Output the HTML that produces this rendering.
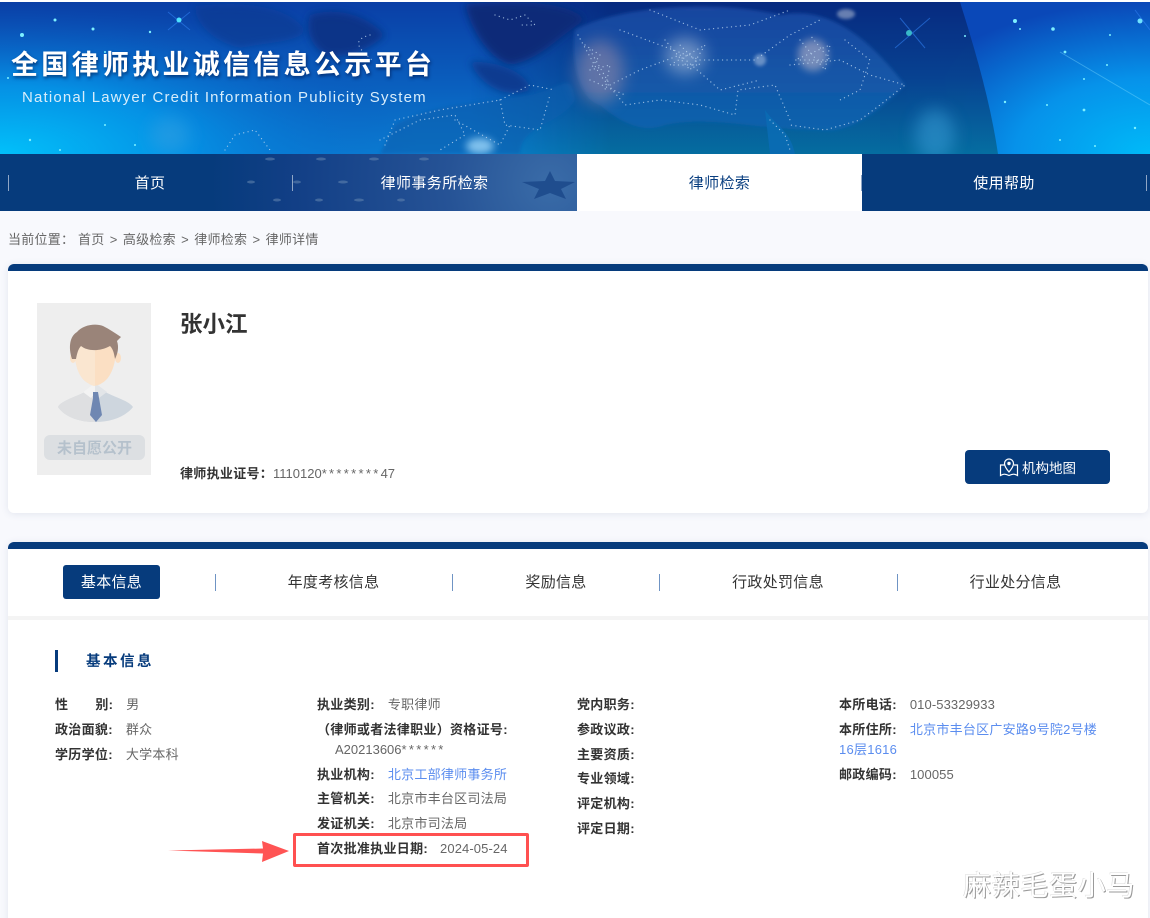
<!DOCTYPE html>
<html lang="zh"><head><meta charset="utf-8"><title>全国律师执业诚信信息公示平台</title>
<style>
*{box-sizing:border-box}
html,body{margin:0;padding:0;width:1150px;height:918px;overflow:hidden}
body{background:#f8f9fd;font-family:"Liberation Sans","Noto Sans CJK SC",sans-serif;color:#666}
#p{position:relative;width:1150px;height:918px;overflow:hidden;background:#f8f9fd}
.a{position:absolute;white-space:nowrap}
.t{position:absolute;white-space:nowrap;font-size:13px;line-height:20px;color:#666;letter-spacing:.25px}
.t b{color:#333;font-weight:700;letter-spacing:.3px}
.t b + span{margin-left:13px}
.n{letter-spacing:.1px}
.s{letter-spacing:2.3px}
.l{color:#5b8def}
.nav{position:absolute;top:154px;height:57px;line-height:59px;font-size:15px;letter-spacing:.4px;color:#fff;text-align:center}
.sep{position:absolute;width:1px;background:#8fa6c6}
.tab{position:absolute;top:565px;height:34px;line-height:36px;font-size:15px;letter-spacing:.3px;color:#333;text-align:center;transform:translateX(-50%)}
.ts{position:absolute;top:574px;width:1px;height:17px;background:#6f94c4}
.card{position:absolute;left:8px;width:1140px;background:#fff;border-radius:6px;border-top:7px solid #063b7c;box-shadow:0 1px 8px rgba(40,60,110,.1)}
</style></head><body><div id="p">

<div class="a" style="left:0;top:0;width:1150px;height:2px;background:#fff"></div>
<svg class="a" style="left:0;top:2px" width="1150" height="152" viewBox="0 2 1150 152">
<defs>
<linearGradient id="b" x1="0" y1="0" x2="0" y2="1"><stop offset="0" stop-color="#0a3fa6"/><stop offset=".55" stop-color="#0a5fbe"/><stop offset="1" stop-color="#0a7fd2"/></linearGradient>
<radialGradient id="lc" cx="0" cy="1" r="1"><stop offset="0" stop-color="#02c0fa"/><stop offset=".45" stop-color="#0590e4"/><stop offset="1" stop-color="#0a55c0" stop-opacity="0"/></radialGradient>
<radialGradient id="rc" cx="1" cy="1" r="1"><stop offset="0" stop-color="#00baf8"/><stop offset=".5" stop-color="#0692ea"/><stop offset="1" stop-color="#0a48b8"/></radialGradient>
<linearGradient id="g" x1="0" y1="0" x2="0" y2="1"><stop offset="0" stop-color="#07297e"/><stop offset=".5" stop-color="#07428f"/><stop offset="1" stop-color="#056d9e"/></linearGradient>
<linearGradient id="land" x1="0" y1="0" x2="0" y2="1"><stop offset="0" stop-color="#1a459f"/><stop offset="1" stop-color="#0e63ad"/></linearGradient>
<linearGradient id="mg" gradientUnits="userSpaceOnUse" x1="470" y1="0" x2="610" y2="0"><stop offset="0" stop-color="#000"/><stop offset="1" stop-color="#fff"/></linearGradient>
<mask id="m" maskUnits="userSpaceOnUse" x="0" y="0" width="1150" height="160"><rect x="0" y="0" width="1150" height="160" fill="url(#mg)"/></mask>
<filter id="f8" x="-60%" y="-60%" width="220%" height="220%"><feGaussianBlur stdDeviation="8"/></filter>
<filter id="f4" x="-60%" y="-60%" width="220%" height="220%"><feGaussianBlur stdDeviation="4"/></filter>
<filter id="f2" x="-60%" y="-60%" width="220%" height="220%"><feGaussianBlur stdDeviation="1.5"/></filter>
</defs>
<rect x="0" y="2" width="1150" height="152" fill="url(#b)"/>
<rect x="0" y="2" width="420" height="152" fill="url(#lc)"/>
<rect x="880" y="2" width="270" height="152" fill="url(#rc)"/>
<path d="M960 2C975 50 990 100 998 154H440V2Z" fill="url(#g)" opacity=".95" mask="url(#m)"/>
<path d="M195 6C250 0 290 8 305 30C300 42 270 42 240 48C215 42 195 25 195 6Z" fill="#0a3a92" opacity=".7" filter="url(#f4)"/>
<path d="M310 15C340 5 370 18 385 35C370 50 345 60 325 55C310 45 305 30 310 15Z" fill="#083184" opacity=".9" filter="url(#f4)"/>
<path d="M465 4C510 0 570 0 585 20C555 40 540 60 510 65C490 60 470 30 465 4Z" fill="#072a78" filter="url(#f4)"/>
<path d="M470 62C500 60 530 75 530 90C505 100 480 85 470 62Z" fill="#0a3a90" filter="url(#f4)"/>
<path d="M575 30C620 5 720 0 780 15C830 5 870 40 905 85C880 110 850 135 820 130C760 130 710 115 665 125C640 135 615 118 600 105C580 100 570 60 575 30Z" fill="url(#land)" filter="url(#f2)"/>
<path d="M395 125C440 100 480 105 530 95C565 88 570 70 575 100C560 125 520 125 520 154H380Z" fill="#0c5faf" opacity=".6" filter="url(#f2)"/>
<path d="M765 110C775 125 790 130 795 154H770Z" fill="#0a6bb4" opacity=".9"/>
<ellipse cx="600" cy="72" rx="24" ry="32" fill="#a790a8" opacity=".5" filter="url(#f8)"/>
<ellipse cx="685" cy="56" rx="20" ry="18" fill="#c3cfe2" opacity=".5" filter="url(#f8)"/>
<ellipse cx="813" cy="55" rx="15" ry="16" fill="#c6bdcc" opacity=".55" filter="url(#f4)"/>
<ellipse cx="760" cy="60" rx="6" ry="6" fill="#b7cbe6" opacity=".5" filter="url(#f2)"/>
<ellipse cx="846" cy="14" rx="9" ry="5" fill="#c6cfdf" opacity=".5" filter="url(#f2)"/>
<ellipse cx="480" cy="146" rx="14" ry="8" fill="#a9e0ff" opacity=".75" filter="url(#f4)"/>
<ellipse cx="935" cy="135" rx="20" ry="26" fill="#3ea2dc" opacity=".5" filter="url(#f8)"/>
<ellipse cx="170" cy="135" rx="20" ry="18" fill="#3ba0e0" opacity=".45" filter="url(#f8)"/>
<g fill="none" stroke="#b9d4ef" stroke-width="1.3" stroke-linecap="round" stroke-dasharray="0 4.5" opacity=".8">
<path d="M578 35L600 75 625 105 660 100 700 105 735 115 738 90 775 85 790 120"/>
<path d="M620 30L660 45 700 60 755 60 790 35 820 20"/>
<path d="M590 50L610 85 640 70 680 55 720 90 760 80"/>
<path d="M585 45L600 55 590 70 610 65 605 90M590 80L625 95"/>
<path d="M665 40L690 70 705 45 670 65 700 65 680 45"/>
<path d="M800 40L825 70 830 45 795 60 830 60 810 35"/>
<path d="M790 65L840 60 870 75 905 85 880 105 860 120 825 130 790 125"/>
<path d="M650 10L700 30 750 25 790 10"/>
<path d="M845 40L870 60 860 90 840 100"/>
<path d="M770 120L785 135 790 150"/>
<path d="M380 140L420 120 455 115 465 135 440 150"/>
<path d="M385 145L395 120 440 110 500 100 530 85 555 90"/>
<path d="M500 100L505 125 540 130 550 95"/>
<path d="M455 120L500 145 510 125"/>
<path d="M495 15L510 20 525 15 535 25 520 25"/>
<path d="M225 150L235 135 255 130 270 150"/>
<path d="M370 35C350 40 360 50 372 60"/>
</g>
<g fill="#7df0ff">
<circle cx="22" cy="35" r="2"/><circle cx="55" cy="20" r="1.5"/><circle cx="93" cy="29" r="1.5"/><circle cx="150" cy="32" r="1.2"/><circle cx="105" cy="52" r="1"/><circle cx="8" cy="78" r="1"/><circle cx="30" cy="140" r="1.2"/><circle cx="60" cy="150" r="1"/><circle cx="105" cy="125" r="1"/><circle cx="135" cy="145" r="1"/>
<circle cx="1015" cy="21" r="2"/><circle cx="1053" cy="29" r="1.8"/><circle cx="1020" cy="29" r="1"/><circle cx="1110" cy="35" r="1"/><circle cx="965" cy="36" r="1"/><circle cx="1065" cy="52" r="1.4"/><circle cx="1107" cy="65" r="1"/><circle cx="1084" cy="79" r="1"/><circle cx="1005" cy="102" r="1.2"/><circle cx="1084" cy="110" r="1.4"/><circle cx="1047" cy="105" r="1"/><circle cx="1095" cy="146" r="1"/><circle cx="1135" cy="128" r="1.2"/><circle cx="1060" cy="140" r="1"/>
</g>
<g stroke="#2f7ef0" stroke-width="1" opacity=".6"><path d="M168 12L190 30M190 12L168 30"/><path d="M900 18L925 48M930 18L895 48"/><path d="M1135 10L1150 30"/></g>
<circle cx="179" cy="20" r="2.5" fill="#4de2ff"/><circle cx="909" cy="33" r="3" fill="#38b8c8"/><circle cx="1140" cy="21" r="2.5" fill="#6fe3ff"/>
<path d="M1060 52L1150 105" stroke="#7fdcff" stroke-width="1" opacity=".4"/>
</svg>

<div class="a" style="left:11px;top:47px;font-size:27px;line-height:36px;font-weight:700;letter-spacing:3.3px;color:#fff;text-shadow:1px 2px 3px rgba(0,20,70,.6)">全国律师执业诚信信息公示平台</div>
<div class="a" style="left:22px;top:88px;font-size:15px;line-height:20px;letter-spacing:1.17px;color:#d8edfb">National Lawyer Credit Information Publicity System</div>

<!-- nav -->
<svg class="a" style="left:0;top:154px" width="1150" height="57" viewBox="0 0 1150 57">
<defs><radialGradient id="em" cx="550" cy="30" r="340" gradientUnits="userSpaceOnUse"><stop offset="0" stop-color="#3a6ca8"/><stop offset=".3" stop-color="#265396"/><stop offset=".75" stop-color="#123f86"/><stop offset="1" stop-color="#063b7c"/></radialGradient></defs>
<rect width="1150" height="57" fill="#063b7c"/>
<rect x="210" width="367" height="57" fill="url(#em)"/>
<path d="M550 17L555 27 575 28 561 35 566 45 550 39 534 45 539 35 522 28 545 27Z" fill="#1f4d8e"/>
<g fill="#5f82ae" opacity=".6"><ellipse cx="270" cy="5" rx="5" ry="1.5"/><ellipse cx="321" cy="5" rx="5" ry="1.5"/><ellipse cx="374" cy="5" rx="5" ry="1.5"/><ellipse cx="424" cy="5" rx="5" ry="1.5"/><ellipse cx="251" cy="28" rx="4" ry="1.5"/><ellipse cx="297" cy="28" rx="4" ry="1.5"/><ellipse cx="343" cy="28" rx="5" ry="1.5"/><ellipse cx="277" cy="46" rx="4" ry="1.5"/><ellipse cx="319" cy="46" rx="4" ry="1.5"/><ellipse cx="359" cy="46" rx="5" ry="1.5"/><ellipse cx="401" cy="46" rx="4" ry="1.5"/></g>
</svg>
<div class="nav" style="left:8px;width:284px">首页</div>
<div class="nav" style="left:292px;width:285px">律师事务所检索</div>
<div class="nav" style="left:577px;width:285px;background:#fff;color:#0a3f80">律师检索</div>
<div class="nav" style="left:862px;width:284px">使用帮助</div>
<div class="sep" style="left:8px;top:175px;height:16px"></div>
<div class="sep" style="left:292px;top:175px;height:16px"></div>
<div class="sep" style="left:861px;top:175px;height:16px"></div>
<div class="sep" style="left:1146px;top:175px;height:16px"></div>

<div class="a" style="left:8px;top:230px;font-size:13px;line-height:20px;letter-spacing:.25px;color:#666">当前位置：</div>
<div class="a" style="left:78px;top:230px;font-size:13px;line-height:20px;letter-spacing:.25px;word-spacing:1.4px;color:#666">首页 &gt; 高级检索 &gt; 律师检索 &gt; 律师详情</div>

<!-- card 1 -->
<div class="card" style="top:264px;height:249px"></div>
<svg class="a" style="left:37px;top:303px" width="114" height="172" viewBox="0 0 114 172">
<rect width="114" height="172" fill="#eeeeee"/>
<path d="M21 104C24 98 36 95 48 89L58 84 68 89C80 95 92 98 96 104 88 114 74 119 58 119 42 119 28 114 21 104Z" fill="#ced6de"/>
<path d="M21 104C24 98 36 95 48 89L58 84V119C42 119 28 114 21 104Z" fill="#dedfe1"/>
<path d="M46 89L58 80 70 89 62 95 58 90 54 95Z" fill="#e2e5e8"/>
<path d="M46 89L58 80V90L54 95Z" fill="#f3f3f3"/>
<path d="M38 40C36 62 43 76 51 80 56 84 61 83 65 80 73 76 80 62 79 40Z" fill="#fbdfc3"/>
<path d="M38 40C36 62 43 76 51 80 54 82 56 83 58 83V40Z" fill="#fae6d0"/>
<ellipse cx="36" cy="55" rx="3" ry="5" fill="#fae2c8"/><ellipse cx="81" cy="55" rx="3" ry="5" fill="#fbdfc3"/>
<path d="M56 89L61 89 62 95 65 112 59 119 53 112 56 95Z" fill="#6f87b2"/>
<path d="M35 56C31 44 33 33 40 29 46 22 58 20 66 23 72 26 78 30 84 34L80 38C82 44 81 50 78 56 77 50 76 46 73 43 62 49 50 48 44 43 41 46 40 51 39 56Z" fill="#9a8479"/>
<rect x="7" y="132" width="101" height="25" rx="6" fill="#dcdfe2"/>
<text x="57.5" y="150" text-anchor="middle" font-size="15" font-weight="700" fill="#b5c1cc" font-family="Liberation Sans,Noto Sans CJK SC,sans-serif">未自愿公开</text>
</svg>
<div class="a" style="left:180px;top:309px;font-size:22.5px;line-height:32px;font-weight:700;color:#333">张小江</div>
<div class="t" style="left:180px;top:464px"><b>律师执业证号：</b></div>
<div class="t" style="left:273px;top:464px;letter-spacing:0">1110120<span class="s">********</span>47</div>
<div class="a" style="left:965px;top:450px;width:145px;height:34px;background:#063b7c;border-radius:4px"></div>
<svg class="a" style="left:999px;top:457px" width="20" height="20" viewBox="0 0 20 20" fill="none" stroke="#fff" stroke-width="1.2">
<path d="M5.5 8H1.5V18.5C4 17 6 16.5 10 18.5 14 16.5 16 17 18.5 18.5V8H15"/>
<path d="M10 15C7 11.5 5.5 9 5.5 6.5A4.500 4.500 0 0 1 14.500 6.500C14.500 9 13 11.500 10 15Z"/>
<circle cx="10" cy="6.5" r="1.7" fill="#fff" stroke="none"/>
</svg>
<div class="a" style="left:1022px;top:459px;font-size:13.5px;line-height:20px;color:#fff">机构地图</div>

<!-- card 2 -->
<div class="card" style="top:542px;height:400px"></div>
<div class="a" style="left:8px;top:616px;width:1140px;height:4px;background:#f4f4f4"></div>
<div class="a" style="left:63px;top:565px;width:97px;height:34px;background:#063b7c;border-radius:3px"></div>
<div class="tab" style="left:111.5px;color:#fff">基本信息</div>
<div class="ts" style="left:215px"></div>
<div class="tab" style="left:333.5px">年度考核信息</div>
<div class="ts" style="left:452px"></div>
<div class="tab" style="left:556px">奖励信息</div>
<div class="ts" style="left:659px"></div>
<div class="tab" style="left:778px">行政处罚信息</div>
<div class="ts" style="left:897px"></div>
<div class="tab" style="left:1015.5px">行业处分信息</div>

<div class="a" style="left:55px;top:650px;width:3px;height:22px;background:#063b7c"></div>
<div class="a" style="left:86px;top:652px;font-size:14.5px;line-height:20px;font-weight:700;letter-spacing:2.5px;color:#063b7c">基本信息</div>

<!-- col 1 -->
<div class="t" style="left:55px;top:695px"><b>性<span style="margin-left:27px">别:</span></b><span>男</span></div>
<div class="t" style="left:55px;top:720px"><b>政治面貌:</b><span>群众</span></div>
<div class="t" style="left:55px;top:745px"><b>学历学位:</b><span>大学本科</span></div>
<!-- col 2 -->
<div class="t" style="left:317px;top:695px"><b>执业类别:</b><span>专职律师</span></div>
<div class="t" style="left:317px;top:720px"><b>（律师或者法律职业）资格证号:</b></div>
<div class="t" style="left:335px;top:740px;letter-spacing:0">A20213606<span class="s">******</span></div>
<div class="t" style="left:317px;top:765px"><b>执业机构:</b><span class="l">北京工部律师事务所</span></div>
<div class="t" style="left:317px;top:789px"><b>主管机关:</b><span>北京市丰台区司法局</span></div>
<div class="t" style="left:317px;top:814px"><b>发证机关:</b><span>北京市司法局</span></div>
<div class="t" style="left:317px;top:839px"><b>首次批准执业日期:</b><span class="n" style="margin-left:12px">2024-05-24</span></div>
<!-- col 3 -->
<div class="t" style="left:577px;top:695px"><b>党内职务:</b></div>
<div class="t" style="left:577px;top:720px"><b>参政议政:</b></div>
<div class="t" style="left:577px;top:745px"><b>主要资质:</b></div>
<div class="t" style="left:577px;top:769px"><b>专业领域:</b></div>
<div class="t" style="left:577px;top:794px"><b>评定机构:</b></div>
<div class="t" style="left:577px;top:819px"><b>评定日期:</b></div>
<!-- col 4 -->
<div class="t" style="left:839px;top:695px"><b>本所电话:</b><span class="n">010-53329933</span></div>
<div class="t" style="left:839px;top:720px"><b>本所住所:</b><span class="l">北京市丰台区广安路9号院2号楼</span></div>
<div class="t l" style="left:839px;top:740px;color:#5b8def">16层1616</div>
<div class="t" style="left:839px;top:765px"><b>邮政编码:</b><span class="n">100055</span></div>

<!-- annotation -->
<div class="a" style="left:293px;top:833px;width:236px;height:34px;border:3px solid #ff5050;border-radius:2px"></div>
<svg class="a" style="left:165px;top:835px" width="130" height="35" viewBox="0 0 130 35">
<path d="M3 15.5L98 13.5 97 6 124 16 97 27 98 18.5Z" fill="#ff5454"/>
</svg>

<!-- watermark -->
<div class="a" style="left:963px;top:866px;font-size:28px;line-height:40px;letter-spacing:.7px;color:#fff;text-shadow:1px 1px 0 #9a9a9a,-.5px -.5px 0 #d8d8d8">麻辣毛蛋小马</div>
</div></body></html>
